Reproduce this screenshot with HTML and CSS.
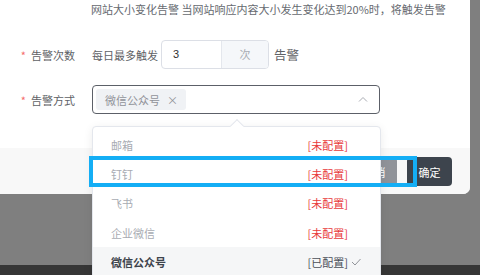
FILE: index.html
```html
<!DOCTYPE html>
<html lang="zh-CN">
<head>
<meta charset="utf-8">
<link rel="stylesheet" href="styles.css">
</head>
<body>
<div class="stage">
  <div class="dialog">
    <div class="dialog-body">
      <div class="desc">网站大小变化告警 当网站响应内容大小发生变化达到20%时，将触发告警</div>
      <div class="form-row row-count">
        <label class="form-label"><span class="req">*</span>告警次数</label>
        <div class="form-content">
          <span class="prefix-text">每日最多触发</span>
          <div class="input-group">
            <div class="input-inner">3</div>
            <div class="input-append">次</div>
          </div>
          <span class="suffix-text">告警</span>
        </div>
      </div>
      <div class="form-row row-way">
        <label class="form-label"><span class="req">*</span>告警方式</label>
        <div class="form-content">
          <div class="select">
            <span class="tag">微信公众号<span class="tag-close">×</span></span>
            <svg class="chevron" width="10" height="6" viewBox="0 0 10 6"><path d="M1 5.5 L5 1.5 L9 5.5" fill="none" stroke="#a8abb2" stroke-width="1"/></svg>
          </div>
        </div>
      </div>
    </div>
    <div class="dialog-footer">
      <button class="btn btn-cancel">取消</button>
      <button class="btn btn-ok">确定</button>
    </div>
  </div>
  <div class="backdrop-fill"></div>
  <div class="page-strip"></div>

  <div class="dropdown">
    <div class="dropdown-arrow"></div>
    <ul class="options">
      <li class="option disabled"><span class="opt-name">邮箱</span><span class="opt-state red">[未配置]</span></li>
      <li class="option disabled"><span class="opt-name">钉钉</span><span class="opt-state red">[未配置]</span></li>
      <li class="option disabled"><span class="opt-name">飞书</span><span class="opt-state red">[未配置]</span></li>
      <li class="option disabled"><span class="opt-name">企业微信</span><span class="opt-state red">[未配置]</span></li>
      <li class="option selected"><span class="opt-name">微信公众号</span><span class="opt-state">[已配置]</span>
        <svg class="check" width="10" height="8" viewBox="0 0 10 8"><path d="M1 4 L4 7 L9.5 1" fill="none" stroke="#909399" stroke-width="1"/></svg>
      </li>
    </ul>
  </div>
  <div class="highlight"></div>
</div>
</body>
</html>
```

FILE: styles.css
```css
* { box-sizing: border-box; }
html, body { margin: 0; padding: 0; }
body {
  font-family: "Noto Sans CJK SC", "Noto Sans", sans-serif;
  font-size: 11px;
  color: #606266;
}
.stage {
  position: relative;
  width: 480px;
  height: 275px;
  overflow: hidden;
  background: #7f7f7f;
  display: flex;
  flex-direction: column;
}
.dialog {
  width: 470px;
  background: #fff;
  border-bottom-right-radius: 7px;
  overflow: hidden;
  flex: none;
}
.dialog-body {
  padding: 0 0 34px 0;
}
.desc {
  height: 18px;
  line-height: 18px;
  padding-left: 91px;
  color: #666a70;
  white-space: nowrap;
}
.form-row {
  display: flex;
  align-items: center;
  height: 29px;
}
.row-count { margin-top: 22px; }
.row-way { margin-top: 16px; }
.form-label {
  width: 92px;
  padding-right: 17px;
  text-align: right;
  color: #606266;
  white-space: nowrap;
}
.req {
  color: #f56c6c;
  margin-right: 5px;
}
.form-content {
  display: flex;
  align-items: center;
}
.prefix-text { margin-right: 3px; color: #606266; }
.input-group {
  display: flex;
  width: 108px;
  height: 29px;
  border: 1px solid #dcdfe6;
  border-radius: 4px;
  overflow: hidden;
}
.input-inner {
  flex: 1;
  padding-left: 11px;
  line-height: 27px;
  color: #303133;
  font-family: "Liberation Sans", sans-serif;
  font-size: 11px;
}
.input-append {
  width: 47px;
  background: #f5f7fa;
  border-left: 1px solid #e4e7ed;
  text-align: center;
  line-height: 27px;
  color: #a8abb2;
}
.suffix-text {
  margin-left: 5px;
  font-size: 12.5px;
  color: #606266;
}
.select {
  position: relative;
  width: 288px;
  height: 29px;
  border: 1px solid #5c6068;
  border-radius: 4px;
  display: flex;
  align-items: center;
  padding-left: 3px;
}
.tag {
  display: inline-flex;
  align-items: center;
  height: 21px;
  padding: 0 8px 0 9px;
  background: #f0f2f5;
  border-radius: 3px;
  color: #909399;
}
.tag-close {
  margin-left: 7px;
  font-size: 11px;
  color: #909399;
}
.chevron {
  position: absolute;
  right: 11px;
  top: 10px;
}
.dialog-footer {
  height: 46px;
  background: #f8f8f8;
  display: flex;
  justify-content: flex-end;
  align-items: flex-start;
  padding: 9px 18px 0 0;
  gap: 10px;
}
.btn {
  height: 29px;
  width: 45px;
  border: none;
  border-radius: 4px;
  font-family: inherit;
  font-size: 11px;
  color: #fff;
  padding: 0;
}
.btn-cancel { background: #909399; }
.btn-ok { background: #3d444d; }
.backdrop-fill { flex: 1; }
.page-strip {
  height: 10px;
  background: #363636;
  flex: none;
}
.dropdown {
  position: absolute;
  left: 92px;
  top: 126px;
  width: 289px;
  height: 160px;
  background: #fff;
  border: 1px solid #e4e7ed;
  border-radius: 4px;
  box-shadow: 0 2px 10px rgba(0,0,0,0.08);
}
.dropdown-arrow {
  position: absolute;
  left: 139px;
  top: -6px;
  width: 10px;
  height: 10px;
  background: #fff;
  border-top: 1px solid #e4e7ed;
  border-left: 1px solid #e4e7ed;
  transform: rotate(45deg);
}
.options {
  list-style: none;
  margin: 0;
  padding: 3px 0 0 0;
}
.option {
  position: relative;
  height: 29.3px;
  display: flex;
  align-items: center;
  justify-content: space-between;
  padding: 0 32px 0 18px;
}
.option.disabled .opt-name { color: #a8abb2; }
.opt-state.red { color: #e83a3a; }
.option.selected {
  background: #f5f6f7;
}
.option.selected .opt-name {
  font-weight: bold;
  color: #3d434b;
}
.option.selected .opt-state { color: #4a4f57; }
.check {
  position: absolute;
  right: 19px;
  top: 11px;
}
.highlight {
  position: absolute;
  left: 89px;
  top: 156px;
  width: 328px;
  height: 31px;
  border: 4px solid #14aef5;
}
```
